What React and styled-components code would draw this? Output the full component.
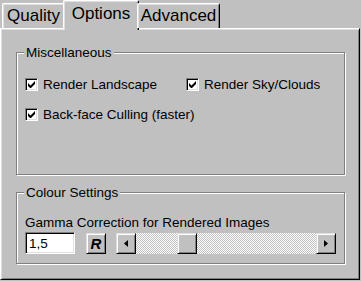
import React from 'react';
import styled, { createGlobalStyle } from 'styled-components';

const GlobalStyle = createGlobalStyle`
  body {
    margin: 0;
    background: #c0c0c0;
    font-family: 'Liberation Sans', Arial, sans-serif;
  }
`;

const Window = styled.div`
  width: 361px;
  height: 281px;
  display: flex;
  flex-direction: column;
  background: #c0c0c0;
  color: #000;
`;

const TabStrip = styled.div`
  height: 28px;
  display: flex;
  align-items: flex-end;
  padding-left: 2px;
  position: relative;
  z-index: 1;
`;

const Tab = styled.div`
  box-sizing: border-box;
  width: ${(p) => p.$width}px;
  height: ${(p) => (p.$active ? 30 : 25)}px;
  margin: ${(p) => (p.$active ? '0 -2px -2px' : '0')};
  padding-bottom: ${(p) => (p.$active ? 4 : 0)}px;
  display: flex;
  align-items: center;
  justify-content: center;
  font-size: 17px;
  background: #c0c0c0;
  border: 1px solid;
  border-color: #fff #000 transparent #fff;
  border-bottom: none;
  border-radius: 2px 2px 0 0;
  box-shadow: inset 1px 1px #dfdfdf, inset -1px 0 #808080;
`;

const Panel = styled.div`
  box-sizing: border-box;
  width: 360px;
  height: 252px;
  border: 1px solid;
  border-color: #fff #000 #000 #fff;
  box-shadow: inset 1px 1px #dfdfdf, inset -1px -1px #808080;
  padding: 0 14px 0 15px;
  display: flex;
  flex-direction: column;
`;

const Group = styled.div`
  box-sizing: border-box;
  height: ${(p) => p.$height}px;
  margin-top: ${(p) => p.$top}px;
  border: 1px solid #808080;
  box-shadow: inset 1px 1px #fff, 1px 1px #fff;
  padding: 0 8px;
  display: flex;
  flex-direction: column;
  font-size: 13.5px;
  white-space: nowrap;
`;

const Caption = styled.div`
  align-self: flex-start;
  margin: -8px 0 0 -1px;
  padding: 0 2px;
  height: 15px;
  line-height: 15px;
  background: #c0c0c0;
`;

const CheckGrid = styled.div`
  display: grid;
  grid-template-columns: 161px auto;
  row-gap: 14px;
  margin-top: 16px;
`;

const CheckRow = styled.label`
  display: flex;
  align-items: center;
  gap: 5px;
  height: 16px;
`;

const Box = styled.span`
  box-sizing: border-box;
  flex: none;
  width: 13px;
  height: 13px;
  background: #fff;
  border: 1px solid;
  border-color: #808080 #fff #fff #808080;
  box-shadow: inset 1px 1px #000, inset -1px -1px #dfdfdf;
  display: flex;
  align-items: center;
  justify-content: center;
`;

const Label = styled.div`
  margin-top: 15px;
  height: 15px;
  line-height: 15px;
`;

const Controls = styled.div`
  margin-top: 2px;
  display: flex;
  align-items: center;
  height: 22px;
`;

const Field = styled.div`
  box-sizing: border-box;
  width: 50px;
  height: 22px;
  background: #fff;
  border: 1px solid;
  border-color: #808080 #fff #fff #808080;
  box-shadow: inset 1px 1px #000, inset -1px -1px #dfdfdf;
  padding-left: 3px;
  display: flex;
  align-items: center;
`;

const Raised = styled.div`
  box-sizing: border-box;
  width: 20px;
  height: 21px;
  background: #c0c0c0;
  border: 1px solid;
  border-color: #dfdfdf #000 #000 #dfdfdf;
  box-shadow: inset 1px 1px #fff, inset -1px -1px #808080;
  display: flex;
  align-items: center;
  justify-content: center;
  flex: none;
`;

const ResetButton = styled(Raised)`
  margin-left: 11px;
  font-size: 15px;
  font-weight: bold;
  font-style: italic;
`;

const ScrollBar = styled.div`
  margin-left: 10px;
  width: 221px;
  height: 21px;
  display: flex;
`;

const Track = styled.div`
  flex: 1;
  display: flex;
  background-color: #fff;
  background-image: conic-gradient(#c0c0c0 25%, #fff 0 50%, #c0c0c0 0 75%, #fff 0);
  background-size: 2px 2px;
`;

const Thumb = styled(Raised)`
  margin-left: ${(p) => p.$offset}px;
`;

const Check = () => (
  <svg width="7" height="7" viewBox="0 0 7 7">
    <path d="M0 2v3l2 2h1l4-4V0L2.5 4.5z" fill="#000" />
  </svg>
);

const Arrow = ({ dir }) => (
  <svg width="4" height="7" viewBox="0 0 4 7">
    <path d={dir === 'left' ? 'M4 0v7L0 3.5z' : 'M0 0v7l4-3.5z'} fill="#000" />
  </svg>
);

const CheckItem = ({ children }) => (
  <CheckRow>
    <Box>
      <Check />
    </Box>
    {children}
  </CheckRow>
);

const tabs = [
  { name: 'Quality', width: 63 },
  { name: 'Options', width: 76, active: true },
  { name: 'Advanced', width: 83 },
];

export default function App() {
  const gamma = 1.5;
  const trackWidth = 181 - 20;
  const offset = Math.round(((gamma - 0.5) / 3.5) * trackWidth) - 5;

  return (
    <>
      <GlobalStyle />
      <Window>
        <TabStrip>
          {tabs.map((t) => (
            <Tab key={t.name} $width={t.width} $active={t.active}>
              {t.name}
            </Tab>
          ))}
        </TabStrip>
        <Panel>
          <Group $top={23} $height={123}>
            <Caption>Miscellaneous</Caption>
            <CheckGrid>
              <CheckItem>Render Landscape</CheckItem>
              <CheckItem>Render Sky/Clouds</CheckItem>
              <CheckItem>Back-face Culling (faster)</CheckItem>
            </CheckGrid>
          </Group>
          <Group $top={17} $height={72}>
            <Caption>Colour Settings</Caption>
            <Label>Gamma Correction for Rendered Images</Label>
            <Controls>
              <Field>1,5</Field>
              <ResetButton>R</ResetButton>
              <ScrollBar>
                <Raised>
                  <Arrow dir="left" />
                </Raised>
                <Track>
                  <Thumb $offset={offset} />
                </Track>
                <Raised>
                  <Arrow dir="right" />
                </Raised>
              </ScrollBar>
            </Controls>
          </Group>
        </Panel>
      </Window>
    </>
  );
}
